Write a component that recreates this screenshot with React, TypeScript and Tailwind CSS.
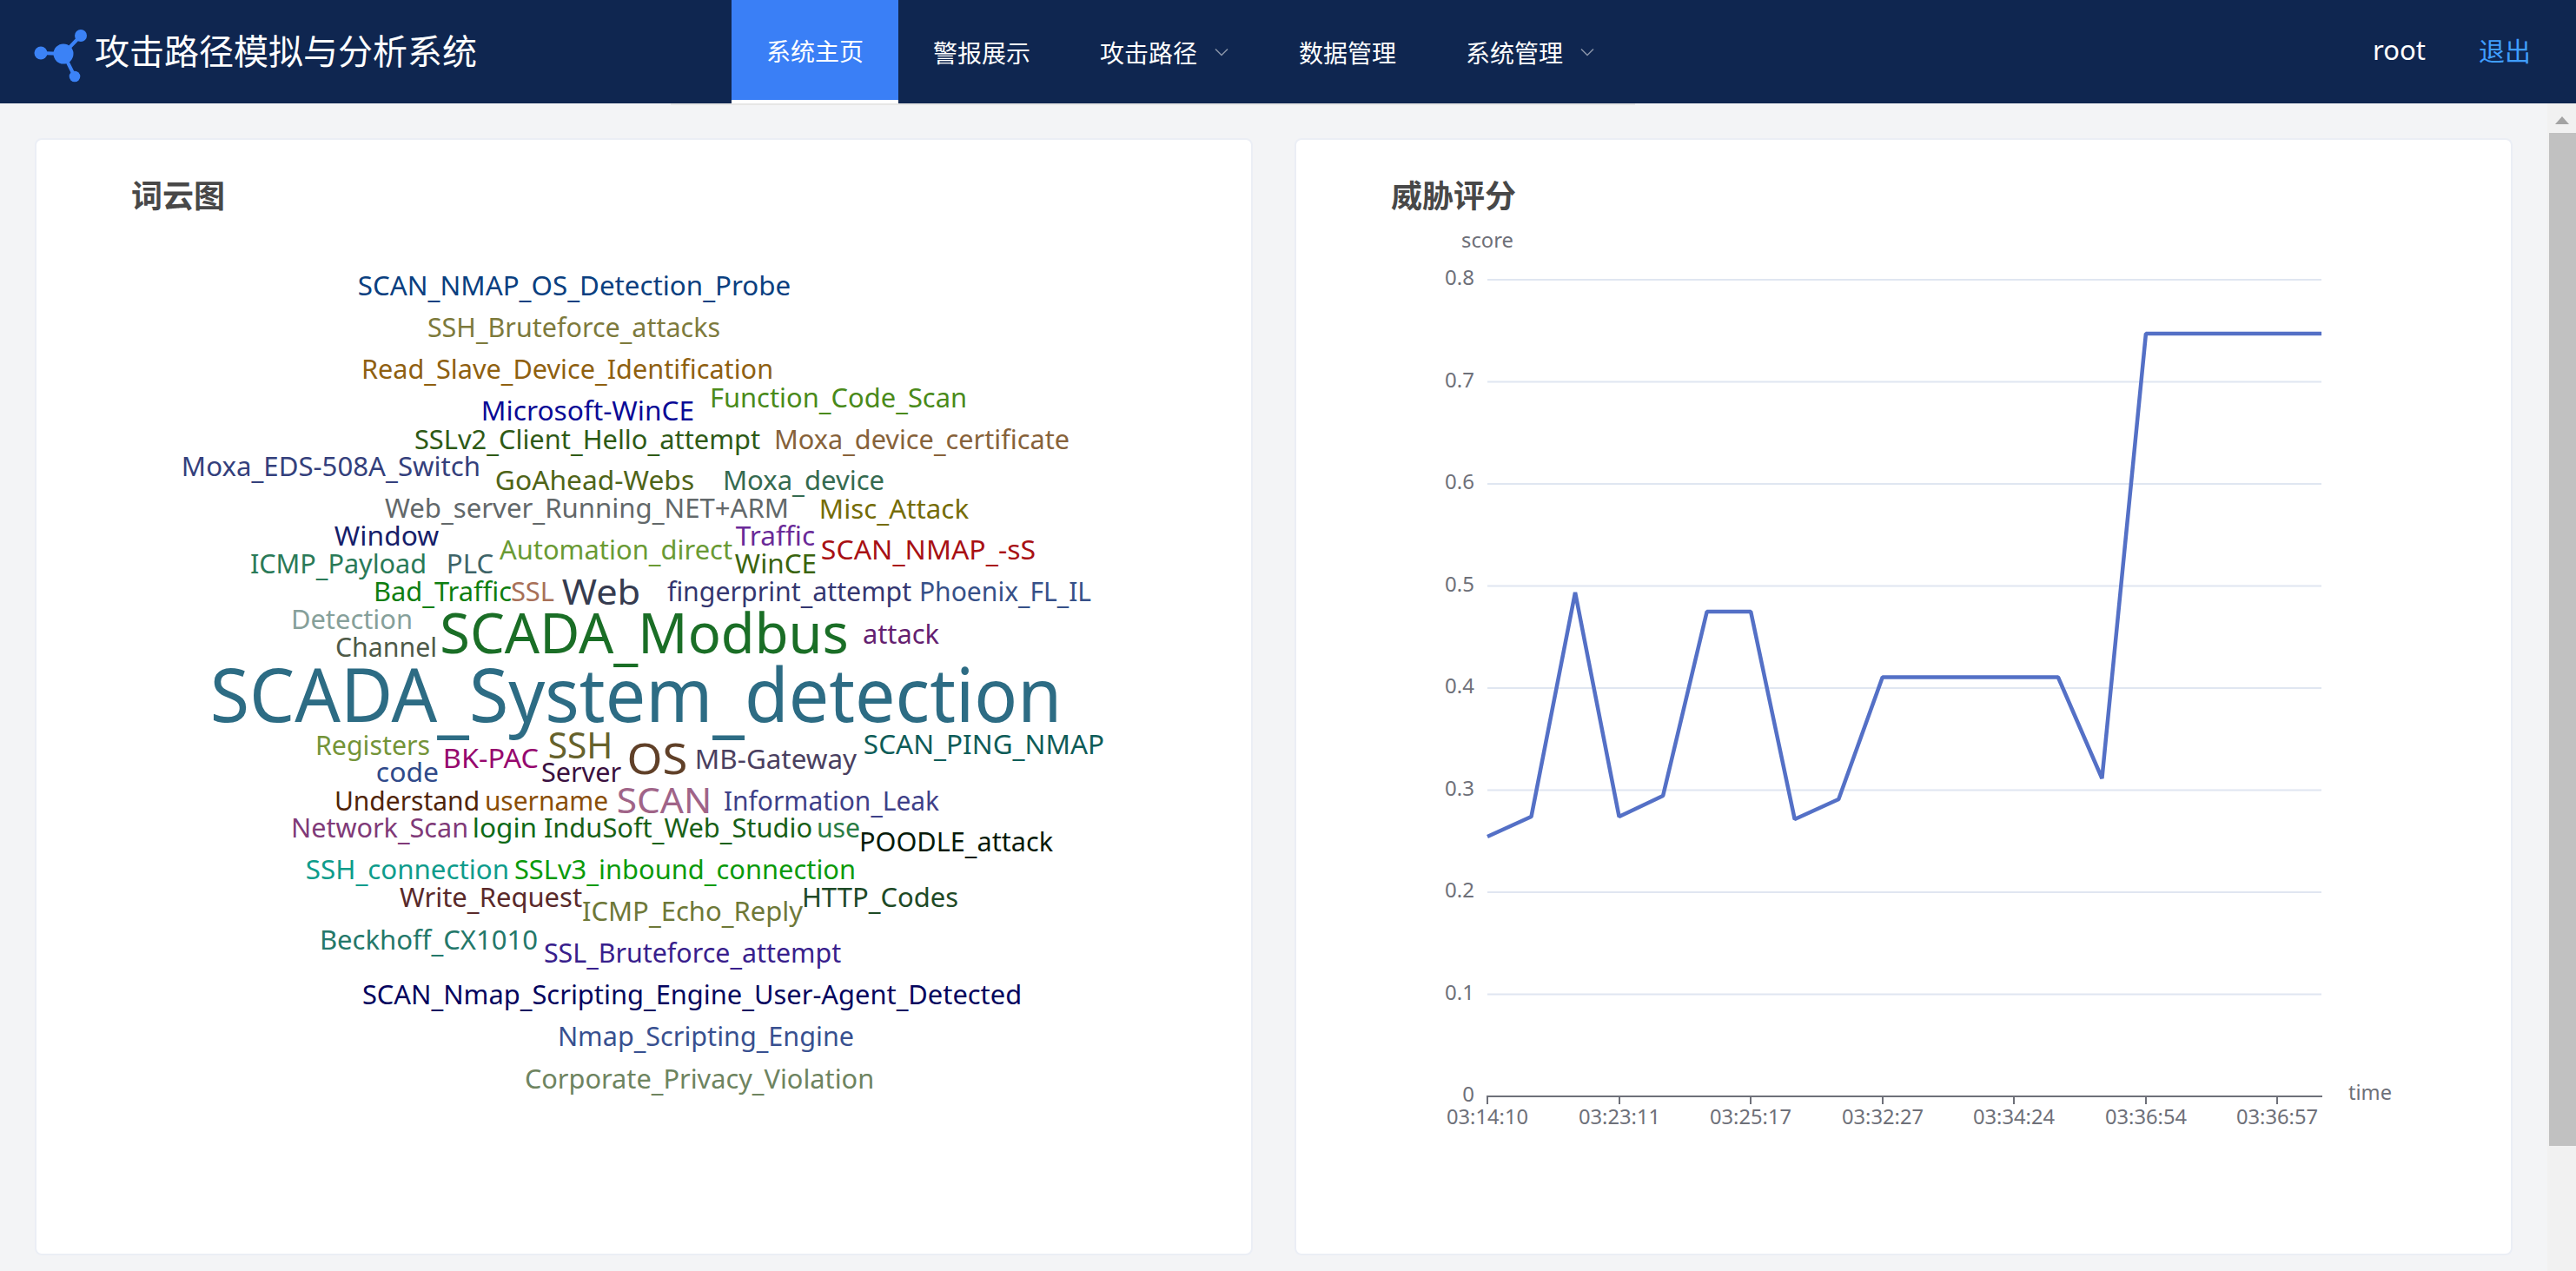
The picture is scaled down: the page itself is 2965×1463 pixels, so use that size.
const words: [string, number, number, number, number, string][] = [
  ["SCAN_NMAP_OS_Detection_Probe", 414, 909, 339, 31, "#0a4080"],
  ["SSH_Bruteforce_attacks", 494, 828, 387, 31, "#7d7a3c"],
  ["Read_Slave_Device_Identification", 418, 889, 435, 31, "#8f6010"],
  ["Function_Code_Scan", 819, 1112, 468, 31, "#4a8a1a"],
  ["Microsoft-WinCE", 556, 798, 483, 31, "#0a0a96"],
  ["SSLv2_Client_Hello_attempt", 479, 874, 516, 31, "#2e5a16"],
  ["Moxa_device_certificate", 893, 1230, 516, 31, "#87623a"],
  ["Moxa_EDS-508A_Switch", 211, 552, 547, 31, "#34407c"],
  ["GoAhead-Webs", 572, 798, 563, 31, "#4f6418"],
  ["Moxa_device", 834, 1017, 563, 31, "#356a50"],
  ["Web_server_Running_NET+ARM", 445, 907, 595, 31, "#62686a"],
  ["Misc_Attack", 945, 1114, 596, 31, "#756c06"],
  ["Window", 387, 504, 627, 31, "#16206a"],
  ["ICMP_Payload", 290, 490, 659, 31, "#2a7a58"],
  ["PLC", 516, 567, 659, 31, "#3e6468"],
  ["Automation_direct", 577, 842, 643, 31, "#6a9a34"],
  ["Traffic", 849, 937, 627, 31, "#6a2a98"],
  ["WinCE", 848, 939, 659, 31, "#3a640e"],
  ["SCAN_NMAP_-sS", 947, 1191, 643, 31, "#a81014"],
  ["Bad_Traffic", 432, 588, 691, 31, "#0e7e10"],
  ["SSL", 590, 637, 691, 31, "#a87058"],
  ["Web", 649, 736, 695, 40, "#363c50"],
  ["fingerprint_attempt", 770, 1048, 691, 31, "#343670"],
  ["Phoenix_FL_IL", 1060, 1255, 691, 31, "#365088"],
  ["SCADA_Modbus", 509, 975, 751, 64, "#1a6e26"],
  ["attack", 995, 1080, 740, 31, "#642070"],
  ["Detection", 337, 474, 723, 31, "#86a09a"],
  ["Channel", 388, 502, 755, 31, "#4e5a48"],
  ["SCADA_System_detection", 245, 1220, 830, 85, "#2d6c84"],
  ["Registers", 365, 494, 868, 31, "#749438"],
  ["code", 435, 504, 899, 31, "#304a8a"],
  ["BK-PAC", 512, 619, 883, 31, "#96086e"],
  ["SSH", 633, 704, 872, 41, "#66622c"],
  ["Server", 625, 714, 899, 31, "#3a1040"],
  ["OS", 724, 790, 890, 49, "#604028"],
  ["MB-Gateway", 802, 985, 884, 31, "#4a4060"],
  ["SCAN_PING_NMAP", 996, 1270, 867, 31, "#0e5c58"],
  ["Understand", 387, 551, 932, 31, "#502408"],
  ["username", 560, 699, 932, 31, "#8a4e06"],
  ["SCAN", 712, 818, 935, 40, "#a06488"],
  ["Information_Leak", 835, 1080, 932, 31, "#3e4088"],
  ["Network_Scan", 337, 538, 963, 31, "#803a78"],
  ["login", 546, 617, 963, 31, "#0e6a18"],
  ["InduSoft_Web_Studio", 628, 934, 963, 31, "#186016"],
  ["use", 942, 989, 963, 31, "#2a7c44"],
  ["POODLE_attack", 991, 1211, 979, 31, "#061a08"],
  ["SSH_connection", 354, 585, 1011, 31, "#0e9c8c"],
  ["SSLv3_inbound_connection", 594, 984, 1011, 31, "#0a9a0a"],
  ["Write_Request", 462, 669, 1043, 31, "#5a2a2a"],
  ["ICMP_Echo_Reply", 672, 923, 1059, 31, "#6e7838"],
  ["HTTP_Codes", 925, 1102, 1043, 31, "#1e4a26"],
  ["Beckhoff_CX1010", 370, 618, 1092, 31, "#24786a"],
  ["SSL_Bruteforce_attempt", 628, 967, 1107, 31, "#38208c"],
  ["SCAN_Nmap_Scripting_Engine_User-Agent_Detected", 419, 1175, 1155, 31, "#04045e"],
  ["Nmap_Scripting_Engine", 644, 982, 1203, 31, "#385090"],
  ["Corporate_Privacy_Violation", 606, 1005, 1252, 31, "#6e8460"],
];

const gridYs: [string, number][] = [
  ["0.8", 322], ["0.7", 439.5], ["0.6", 557], ["0.5", 674.5], ["0.4", 792], ["0.3", 909.5], ["0.2", 1027], ["0.1", 1144.5],
];
const ticks: [string, number][] = [
  ["03:14:10", 1712], ["03:23:11", 1864], ["03:25:17", 2015], ["03:32:27", 2167], ["03:34:24", 2318], ["03:36:54", 2470], ["03:36:57", 2621],
];
const ys = [963, 940, 682, 940, 916, 704, 704, 943, 920, 779.5, 779.5, 779.5, 779.5, 779.5, 896, 384, 384, 384, 384, 384];
const linePoints = ys.map((y, i) => `${1712 + i * 50.53},${y}`).join(" ");

function Word({ text, size }: { text: string; size: number }) {
  const parts = text.split("_");
  const drop = Math.round(size * 0.1 * 10) / 10;
  return (
    <>
      {parts.map((part, i) => (
        <tspan key={i}>
          {i > 0 ? <tspan dy={drop}>_</tspan> : null}
          {i > 0 ? <tspan dy={-drop}>{part}</tspan> : part}
        </tspan>
      ))}
    </>
  );
}

function Chevron() {
  return (
    <svg width="18" height="10" viewBox="0 0 18 10" className="ml-[19px]" fill="none">
      <path d="M2 1.5 L9 8.5 L16 1.5" stroke="#8a94a8" strokeWidth="1.5" />
    </svg>
  );
}

function NavItem({ label, active, chevron }: { label: string; active?: boolean; chevron?: boolean }) {
  return (
    <div
      className={
        active
          ? "flex items-center px-[40px] text-[28px] text-white bg-[#3a7ff6] border-b-4 border-white"
          : "flex items-center px-[40px] text-[28px] text-white"
      }
    >
      <span>{label}</span>
      {chevron ? <Chevron /> : null}
    </div>
  );
}

function Card({ title, children }: { title: string; children: React.ReactNode }) {
  return (
    <section className="w-[1402px] h-[1286px] bg-white border-2 border-[#ebeef5] rounded-[8px] flex flex-col">
      <h2 className="pl-[109px] pt-[41px] pb-[10px] text-[36px] leading-[48px] font-bold text-[#484848]">{title}</h2>
      {children}
    </section>
  );
}

export default function App() {
  return (
    <div className="w-[2965px] h-[1463px] overflow-hidden flex flex-col bg-[#f3f4f6] font-['Noto_Sans','Noto_Sans_CJK_SC',sans-serif]">
      <header className="h-[119px] shrink-0 bg-[#0f2650] flex items-stretch font-['Noto_Sans_CJK_SC',sans-serif]">
        <div className="w-[842px] flex items-center">
          <svg width="109" height="119" viewBox="0 0 109 119" className="shrink-0" fill="#3b82f6">
            <path d="M47 61 L73 62 L93 41 M73 62 L86 88" stroke="#3b82f6" strokeWidth="4" fill="none" />
            <circle cx="73" cy="62" r="11.5" />
            <circle cx="47" cy="61" r="7.5" />
            <circle cx="93" cy="41" r="7" />
            <circle cx="86" cy="88" r="6.3" />
          </svg>
          <span className="mb-[5px] text-[40px] text-white whitespace-nowrap">攻击路径模拟与分析系统</span>
        </div>
        <nav className="flex items-stretch">
          <NavItem label="系统主页" active />
          <NavItem label="警报展示" />
          <NavItem label="攻击路径" chevron />
          <NavItem label="数据管理" />
          <NavItem label="系统管理" chevron />
        </nav>
        <div className="ml-auto flex items-center pr-[52px] pb-[4px]">
          <span className="text-[31px] text-white font-['Noto_Sans',sans-serif]">root</span>
          <span className="ml-[61px] text-[30px] text-[#409eff]">退出</span>
        </div>
      </header>
      <div className="flex flex-1 min-h-0">
        <main className="flex-1 flex flex-col">
          <div className="ml-[772px] w-[1110px] h-[2px] bg-[#e6e6e6]" />
          <div className="flex gap-[48px] pl-[40px] pt-[38px]">
            <Card title="词云图">
              <svg viewBox="42 260 1398 1183" className="block w-[1398px] h-[1183px]">
                {words.map(([t, x0, x1, y, size, color]) => (
                  <text
                    key={t}
                    x={x0 - 1.5 - size * 0.02}
                    y={y + 0.5}
                    fontSize={size}
                    fill={color}
                    textLength={x1 - x0 + 2 + size * 0.04}
                    lengthAdjust="spacingAndGlyphs"
                  >
                    <Word text={t} size={size} />
                  </text>
                ))}
              </svg>
            </Card>
            <Card title="威胁评分">
              <svg viewBox="1492 260 1398 1183" className="block w-[1398px] h-[1183px]">
                {gridYs.map(([label, y]) => (
                  <g key={label}>
                    <line x1="1712" x2="2672" y1={y} y2={y} stroke="#e0e6f1" strokeWidth="2" />
                    <text x="1697" y={y + 6} fontSize="24" fill="#6e7079" textAnchor="end">{label}</text>
                  </g>
                ))}
                <text x="1697" y="1268" fontSize="24" fill="#6e7079" textAnchor="end">0</text>
                <text x="1682" y="285" fontSize="24" fill="#6e7079" textLength="60" lengthAdjust="spacingAndGlyphs">score</text>
                <text x="2703" y="1266" fontSize="24" fill="#6e7079" textLength="50" lengthAdjust="spacingAndGlyphs">time</text>
                <line x1="1711" x2="2673" y1="1262" y2="1262" stroke="#6e7079" strokeWidth="2" />
                {ticks.map(([label, x]) => (
                  <g key={label}>
                    <line x1={x} x2={x} y1="1262" y2="1271" stroke="#6e7079" strokeWidth="2" />
                    <text x={x - 47} y="1294" fontSize="24" fill="#6e7079" textLength="94" lengthAdjust="spacingAndGlyphs">{label}</text>
                  </g>
                ))}
                <polyline points={linePoints} fill="none" stroke="#5470c6" strokeWidth="4.5" strokeLinejoin="bevel" />
              </svg>
            </Card>
          </div>
        </main>
        <aside className="w-[33px] shrink-0 bg-[#f1f1f1] flex flex-col items-end">
          <div className="h-[34px] w-full flex items-center justify-center">
            <svg width="16" height="9" viewBox="0 0 16 9" fill="#a3a3a3" className="mt-[5px]">
              <path d="M8 0 L16 9 L0 9 Z" />
            </svg>
          </div>
          <div className="w-[31px] h-[1166px] bg-[#c1c1c1]" />
        </aside>
      </div>
    </div>
  );
}
